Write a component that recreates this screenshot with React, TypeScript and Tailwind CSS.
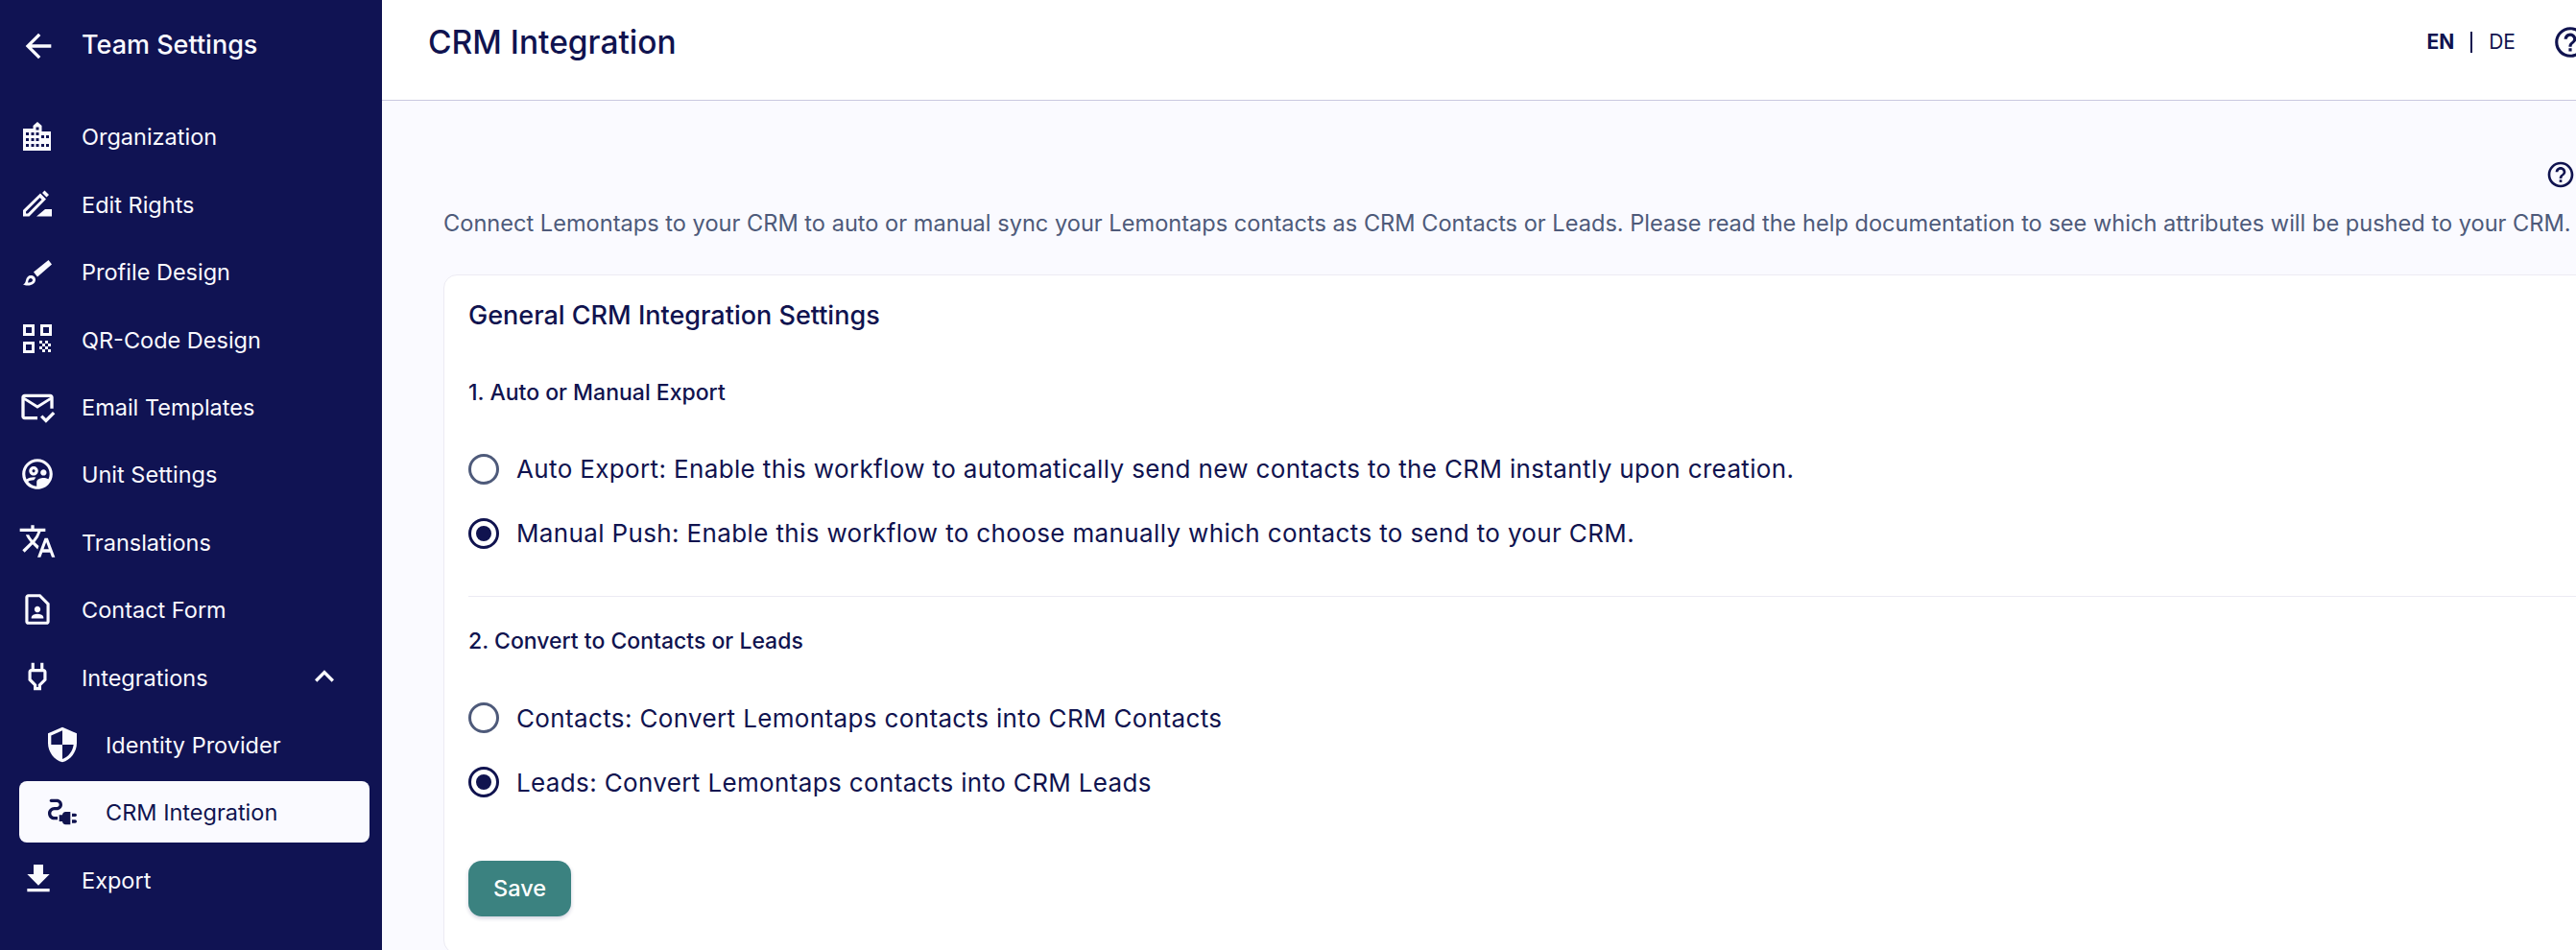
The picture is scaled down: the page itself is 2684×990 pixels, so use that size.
import React from 'react'
import {
  MdArrowBack,
  MdElectricalServices,
  MdExpandLess,
  MdFileDownload,
  MdHelpOutline,
  MdOutlineContactPage,
  MdOutlineMarkEmailRead,
  MdOutlinePower,
  MdOutlineSupervisedUserCircle,
  MdSecurity,
  MdTranslate,
} from 'react-icons/md'

type IconProps = { className?: string }

const CityIcon = ({ className }: IconProps) => (
  <svg viewBox="0 0 30 30" className={className} fill="currentColor" fillRule="evenodd">
    <path d="M15 0l4.500 4v6H29v20H0V7h10.500V4zM13.500 5.500v3h3v-3zM3 11v3h3v-3zM8.500 11v3h3v-3zM13.500 11v3h3v-3zM19 14v3h3v-3zM24 14v3h3v-3zM3 17v3h3v-3zM8.500 17v3h3v-3zM13.500 17v3h3v-3zM3 23v3h3v-3zM8.500 23v3h3v-3zM13.500 23v3h3v-3zM19 23v3h3v-3zM24 23v3h3v-3z" />
  </svg>
)

const PencilIcon = ({ className }: IconProps) => (
  <svg viewBox="0 0 30 27" className={className} fill="currentColor" fillRule="evenodd">
    <path d="M0 27v-6.500L18 3l6 6L6.500 27zM3 22v2h2L19.500 9.500l-2-2zM20 2.500L22.500 0 27 4.500 24.500 7zM14 27l9-7.500h7V27z" />
  </svg>
)

const BrushIcon = ({ className }: IconProps) => (
  <svg viewBox="0 0 30 30" className={className} fill="currentColor" fillRule="evenodd">
    <path d="M11 15.500L26.500 3 30 7.500 15 20.500zM8 19c3 0 5 2 5 4.500 0 3.500-3.500 6-8 6-2 0-4-.5-5-1 2-1 2.500-2.500 3-4.500.500-3 2.500-5 5-5zM8 22c-1.500 0-2 1-2.500 2.500l-.5 2c2.500.500 5-1 5-2.500 0-1-.800-2-2-2z" />
  </svg>
)

const QrIcon = ({ className }: IconProps) => (
  <svg viewBox="0 0 30 30" className={className} fill="currentColor" fillRule="evenodd">
    <path d="M0 0h12v12H0zM3 3v6h6V3zM18 0h12v12H18zM21 3v6h6V3zM0 18h12v12H0zM3 21v6h6v-6z" />
    <path d="M17 17h3v3h-3zM23 17h3v3h-3zM20 20h3v3h-3zM26 20h3v3h-3zM17 23h3v3h-3zM23 23h3v3h-3zM20 26h3v3h-3zM26 26h3v3h-3z" />
  </svg>
)

const navItems = [
  { label: 'Organization', icon: CityIcon, size: 'size-[30px]' },
  { label: 'Edit Rights', icon: PencilIcon, size: 'size-[30px]' },
  { label: 'Profile Design', icon: BrushIcon, size: 'size-[30px]' },
  { label: 'QR-Code Design', icon: QrIcon, size: 'size-[30px]' },
  { label: 'Email Templates', icon: MdOutlineMarkEmailRead, size: 'size-[40px]' },
  { label: 'Unit Settings', icon: MdOutlineSupervisedUserCircle, size: 'size-[38px]' },
  { label: 'Translations', icon: MdTranslate, size: 'size-[40px]' },
  { label: 'Contact Form', icon: MdOutlineContactPage, size: 'size-[38px]' },
]

const Radio = ({ checked, label }: { checked?: boolean; label: string }) => (
  <label className="flex h-[67px] items-center gap-[18px]">
    {checked ? (
      <span className="flex size-[32px] items-center justify-center rounded-full border-[3.500px] border-[#10134f]">
        <span className="size-[16px] rounded-full bg-[#10134f]" />
      </span>
    ) : (
      <span className="size-[32px] rounded-full border-[3.500px] border-[#4e5a7a]" />
    )}
    <span className="text-[26px] tracking-[0.36px] whitespace-nowrap text-[#10134f]">{label}</span>
  </label>
)

export default function App() {
  return (
    <div className="flex h-[990px] w-[2684px] overflow-hidden bg-[#fafaff] font-['Inter',sans-serif] text-[#10134f]">
      <aside className="flex h-full w-[398px] shrink-0 flex-col bg-[#101353] px-[20px] text-[#fafaff]">
        <div className="flex h-[95px] items-center">
          <span className="flex w-[65px] shrink-0">
            <MdArrowBack className="size-[40px]" />
          </span>
          <span className="text-[27px] font-medium whitespace-nowrap">Team Settings</span>
        </div>
        <nav className="mt-[15px] flex flex-col gap-[6.400px]">
          {navItems.map(({ label, icon: Icon, size }) => (
            <a key={label} className="flex h-[64px] items-center">
              <span className="flex w-[65px] shrink-0">
                <span className="flex w-[38px] justify-center">
                  <Icon className={`${size} shrink-0`} />
                </span>
              </span>
              <span className="pt-[2px] text-[23.500px] whitespace-nowrap">{label}</span>
            </a>
          ))}
          <a className="flex h-[64px] items-center">
            <span className="flex w-[65px] shrink-0">
              <MdOutlinePower className="size-[38px]" />
            </span>
            <span className="flex-1 pt-[2px] text-[23.500px]">Integrations</span>
            <MdExpandLess className="mr-[20px] size-[40px]" />
          </a>
          <a className="flex h-[64px] items-center">
            <span className="flex w-[90px] shrink-0 pl-[25px]">
              <MdSecurity className="size-[40px]" />
            </span>
            <span className="pt-[2px] text-[23.500px]">Identity Provider</span>
          </a>
          <a className="flex h-[64px] w-[365px] items-center rounded-[8px] bg-[#fafaff] text-[#10134f]">
            <span className="flex w-[90px] shrink-0 pl-[25px]">
              <MdElectricalServices className="size-[40px]" />
            </span>
            <span className="pt-[2px] text-[23.500px]">CRM Integration</span>
          </a>
          <a className="flex h-[64px] items-center">
            <span className="flex w-[65px] shrink-0">
              <MdFileDownload className="size-[40px]" />
            </span>
            <span className="pt-[2px] text-[23.500px]">Export</span>
          </a>
        </nav>
      </aside>

      <div className="flex min-w-0 flex-1 flex-col">
        <header className="flex h-[105px] shrink-0 items-center border-b border-[#c9c8e0] bg-white pb-[16px] pl-[48px]">
          <h1 className="flex-1 text-[33.500px] font-medium whitespace-nowrap">CRM Integration</h1>
          <div className="flex items-center text-[21px]">
            <span className="font-bold">EN</span>
            <span className="mx-[17px] h-[22px] w-[2px] bg-[#10134f]" />
            <span>DE</span>
          </div>
          <MdHelpOutline className="mr-[-13px] ml-[38px] size-[38px] shrink-0" />
        </header>

        <main className="min-h-0 flex-1 pl-[64px]">
          <div className="flex h-[93px] items-end justify-end">
            <MdHelpOutline className="size-[32px]" />
          </div>
          <p className="mt-[17px] text-[23.600px] whitespace-nowrap text-[#4e5a7a]">
            Connect Lemontaps to your CRM to auto or manual sync your Lemontaps contacts as CRM Contacts or Leads. Please read the help documentation to see which attributes will be pushed to your CRM.
          </p>
          <section className="mt-[36px] w-[2400px] rounded-[14px] border border-[#ecebf3] bg-white px-[25px] pb-[38px]">
            <h2 className="pt-[22px] text-[27px] font-medium">General CRM Integration Settings</h2>
            <h3 className="mt-[42px] text-[23px] font-medium">1. Auto or Manual Export</h3>
            <div className="mt-[29px]">
              <Radio label="Auto Export: Enable this workflow to automatically send new contacts to the CRM instantly upon creation." />
              <Radio checked label="Manual Push: Enable this workflow to choose manually which contacts to send to your CRM." />
            </div>
            <hr className="mt-[32px] border-[#ecebf3]" />
            <h3 className="mt-[29px] text-[23px] font-medium">2. Convert to Contacts or Leads</h3>
            <div className="mt-[29px]">
              <Radio label="Contacts: Convert Lemontaps contacts into CRM Contacts" />
              <Radio checked label="Leads: Convert Lemontaps contacts into CRM Leads" />
            </div>
            <button className="mt-[48px] h-[58px] w-[107px] rounded-[14px] bg-[#3b8280] text-[23.500px] font-medium text-white shadow-[0_2px_4px_rgba(16,19,83,0.2)]">
              Save
            </button>
          </section>
        </main>
      </div>
    </div>
  )
}
